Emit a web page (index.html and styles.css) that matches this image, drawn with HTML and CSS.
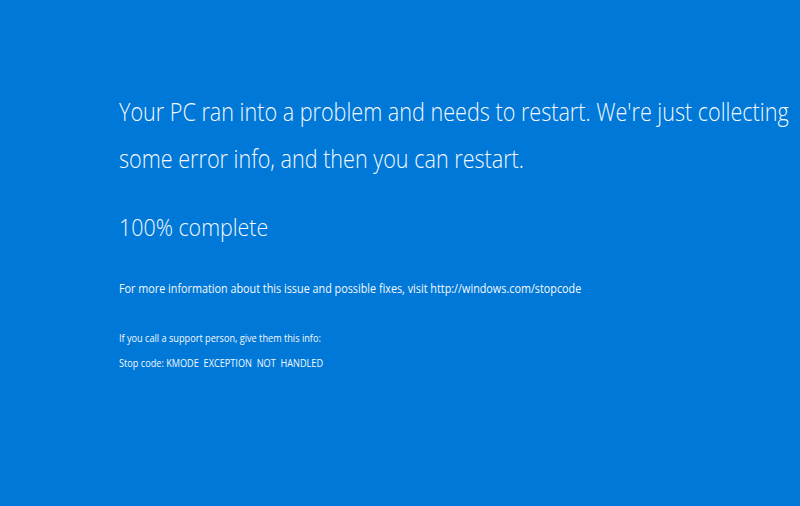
FILE: index.html
```html
<!DOCTYPE html>
<html lang="en">
<head>
<meta charset="utf-8">
<title>Your PC ran into a problem</title>
<link rel="stylesheet" href="styles.css">
</head>
<body>
<main class="bsod">
  <h1 class="headline">Your PC ran into a problem and needs to restart. We're just collecting<br>some error info, and then you can restart.</h1>
  <p class="progress">100% complete</p>
  <p class="more">For more information about this issue and possible fixes, visit http://windows.com/stopcode</p>
  <div class="support">
    <p class="support-line">If you call a support person, give them this info:</p>
    <p class="support-line">Stop code: KMODE&nbsp; EXCEPTION&nbsp; NOT&nbsp; HANDLED</p>
  </div>
</main>
</body>
</html>
```
FILE: styles.css
```css
html, body {
  margin: 0;
  padding: 0;
  background: #0078d7;
}
body {
  width: 800px;
  height: 506px;
  overflow: hidden;
  font-family: "Open Sans", "Noto Sans", sans-serif;
  font-weight: 300;
  color: #f4f9ff;
}
.bsod {
  display: flex;
  flex-direction: column;
  align-items: flex-start;
  padding: 88px 0 0 119px;
}
.bsod p, .bsod h1 { margin: 0; white-space: nowrap; }
.headline {
  font-size: 26px;
  font-weight: 300;
  line-height: 47px;
  transform: scaleX(0.83);
  transform-origin: left top;
}
.progress {
  margin-top: 30px !important;
  font-size: 23px;
  line-height: 30px;
  transform: scaleX(0.93);
  transform-origin: left top;
}
.more {
  margin-top: 39px !important;
  font-size: 12px;
  line-height: 16px;
  font-weight: 400;
  transform: scaleX(0.9);
  transform-origin: left top;
}
.support {
  margin-top: 29px;
  display: flex;
  flex-direction: column;
  align-items: flex-start;
}
.support-line {
  font-size: 10px;
  line-height: 25px;
  font-weight: 400;
  transform: scaleX(0.915);
  transform-origin: left top;
}
```
